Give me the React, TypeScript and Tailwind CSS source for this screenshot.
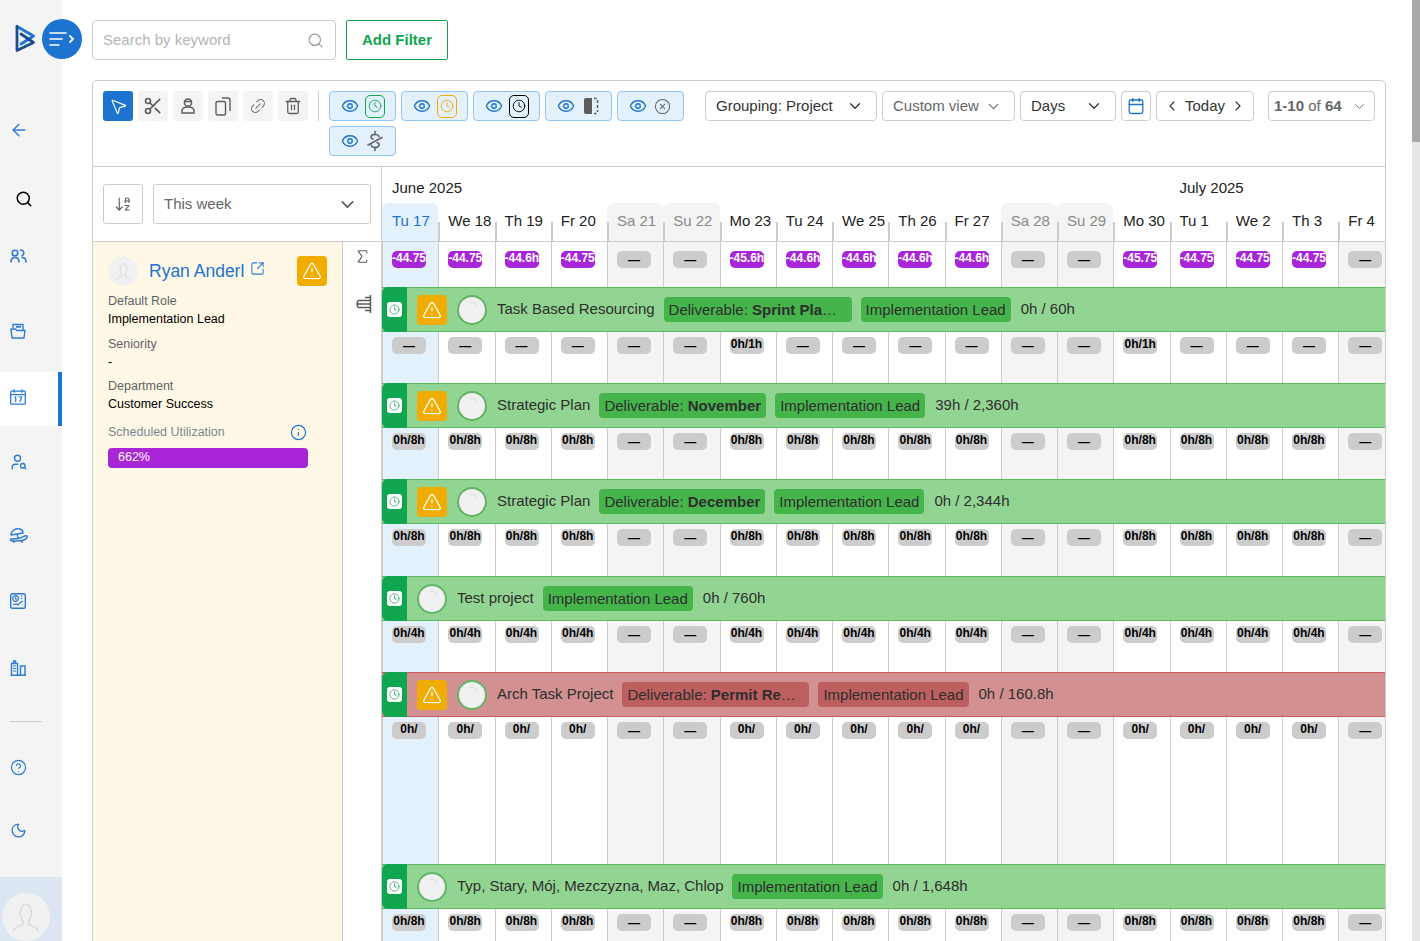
import {
  ArrowDownAZ, ArrowLeft, Calendar, ChevronDown, ChevronLeft, ChevronRight, CircleHelp, CircleX, Clock,
  Eye, Info, Link2, Moon, MousePointer2, Scissors, Search, Sigma, SquareArrowOutUpRight, Trash2,
  TriangleAlert, UserSearch,
} from 'lucide-react';
import type { ReactNode } from 'react';

const days = ['Tu 17', 'We 18', 'Th 19', 'Fr 20', 'Sa 21', 'Su 22', 'Mo 23', 'Tu 24', 'We 25', 'Th 26', 'Fr 27', 'Sa 28', 'Su 29', 'Mo 30', 'Tu 1', 'We 2', 'Th 3', 'Fr 4'];
const weekend = [4, 5, 11, 12, 17];
const summary = ['-44.75h', '-44.75h', '-44.6h', '-44.75h', '', '', '-45.6h', '-44.6h', '-44.6h', '-44.6h', '-44.6h', '', '', '-45.75h', '-44.75h', '-44.75h', '-44.75h', ''];

const rows = [
  { warn: true, title: 'Task Based Resourcing', deliverable: 'Sprint Planning', chipClass: 'w-[188px] pr-[12px]', hours: '0h / 60h', cell: '', height: 'h-[51px]' },
  { warn: true, title: 'Strategic Plan', deliverable: 'November', chipClass: 'pr-[5px]', hours: '39h / 2,360h', cell: '0h/8h', height: 'h-[51px]' },
  { warn: true, title: 'Strategic Plan', deliverable: 'December', chipClass: 'pr-[5px]', hours: '0h / 2,344h', cell: '0h/8h', height: 'h-[52px]' },
  { warn: false, title: 'Test project', deliverable: '', chipClass: '', hours: '0h / 760h', cell: '0h/4h', height: 'h-[51px]' },
  { warn: true, title: 'Arch Task Project', deliverable: 'Permit Review', chipClass: 'w-[187px] pr-[12px]', hours: '0h / 160.8h', cell: '0h/', height: 'h-[147px]', red: true },
  { warn: false, title: 'Typ, Stary, Mój, Mezczyzna, Maz, Chlop', deliverable: '', chipClass: '', hours: '0h / 1,648h', cell: '0h/8h', height: 'h-[32px]' },
];

function Logo() {
  return (
    <svg width="22" height="30" viewBox="0 0 22 30" fill="none" strokeWidth="2.8" strokeLinejoin="round" strokeLinecap="round">
      <path d="M3 2.500 L19.500 12 L7 20" stroke="#1c73d0" />
      <path d="M3 2.500 V26.500 L19.500 18.500 L7 10" stroke="#174f91" />
    </svg>
  );
}

function Avatar({ size = 'w-[30px] h-[30px]' }: { size?: string }) {
  return (
    <span className={`${size} shrink-0 rounded-full bg-[#f1f1f1] flex items-center justify-center`}>
      <svg viewBox="0 0 24 24" className="w-[70%] h-[70%]" fill="none" stroke="#dedede" strokeWidth="1.3" strokeLinecap="round">
        <path d="M3 22c1-3 5-3 7-5v-2c-1-1-2-3-2-6 0-3 2-6 4-6s4 3 4 6c0 3-1 5-2 6v2c2 2 6 2 7 5" />
      </svg>
    </span>
  );
}

function BarAvatar() {
  return (
    <span className="w-[30px] h-[30px] shrink-0 rounded-full bg-[#f1f1f1] border-2 border-[#62b565] flex items-center justify-center">
      <svg viewBox="0 0 24 24" className="w-full h-full" fill="none" stroke="#e2e2e2" strokeWidth="1.2">
        <path d="M9 5h5l3 4" />
      </svg>
    </span>
  );
}

function SideItem({ className, children }: { className: string; children: ReactNode }) {
  return <div className={`h-[20px] pl-[10px] flex items-center text-[#2b7bd6] ${className}`}>{children}</div>;
}

function UsersIcon() {
  return (
    <svg width="17" height="14" viewBox="0 0 17 14" fill="none" stroke="#2b7bd6" strokeWidth="1.6" strokeLinecap="round">
      <circle cx="5" cy="4" r="2.800" />
      <path d="M10.500 1.200c1.800-.4 3.300.9 3.300 2.800 0 1.300-.7 2.300-1.800 2.700" />
      <path d="M1 13c0-3 1.500-4.500 4-4.500S9 10 9 13M12 8.500c2.500 0 4 1.500 4 4.500" />
    </svg>
  );
}

function FolderIcon() {
  return (
    <svg width="16" height="16" viewBox="0 0 16 16" fill="none" stroke="#2b7bd6" strokeWidth="1.4" strokeLinejoin="round">
      <path d="M3 5V1.500h10V7" />
      <path d="M6 3.800h5" strokeWidth="1.800" />
      <path d="M1 6h4.500l1.500 1.500h8L14 15H2z" />
    </svg>
  );
}

function BuildingIcon() {
  return (
    <svg width="16" height="16" viewBox="0 0 16 16" fill="none" stroke="#2b7bd6" strokeWidth="1.4">
      <path d="M1.500 15V3.500h6V15M3.500 3.500V1h2v2.500" />
      <path d="M3 6h3M3 8.500h3M3 11h3" strokeWidth="1" />
      <path d="M10.500 15V6h4.500v9M0.500 15.300h15.500" />
    </svg>
  );
}

function CalendarSeventeen() {
  return (
    <svg width="16" height="16" viewBox="0 0 16 16" fill="none" stroke="#2b7bd6" strokeWidth="1.3">
      <rect x="0.700" y="2.200" width="14.600" height="13" rx="1" />
      <path d="M0.700 5.600h14.600M4 0.300v3.400M12 0.300v3.400" />
      <path d="M4.500 8.500l1.200-.6v5M8.500 8h3.200l-2 5" strokeWidth="1.200" />
    </svg>
  );
}

function Umbrella() {
  return (
    <svg width="18" height="16" viewBox="0 0 18 16" fill="none" stroke="#2b7bd6" strokeWidth="1.4" strokeLinejoin="round">
      <path d="M1 6c1-4 5-6 9-5 2 .6 3 2 3 4L1 7z" />
      <path d="M1 11c3 0 6 0 9-1 3-1 5-3 7-2 1 1-1 3-3 4-3 1-8 1-12 1-1 0-2-1-1-2zM4 13v2M12 13v2M7 6l1 4" />
    </svg>
  );
}

function ReportIcon() {
  return (
    <svg width="16" height="16" viewBox="0 0 16 16" fill="none" stroke="#2b7bd6" strokeWidth="1.2">
      <rect x="0.700" y="0.700" width="14.600" height="14.600" rx="1.500" strokeWidth="1.400" />
      <circle cx="5.500" cy="5.500" r="2.800" />
      <path d="M5.500 3.800v1.800l1.200.8M11 3h1.500M11 5.500h1.500M3 12l3-1 2 1 3-3 2-1" />
    </svg>
  );
}

function PersonIcon() {
  return (
    <svg width="18" height="18" viewBox="0 0 18 18" fill="none" stroke="#5c5c5c" strokeWidth="1.500">
      <circle cx="9" cy="5.500" r="3.600" />
      <path d="M5.500 4.500h7" />
      <path d="M3 16v-2c0-2 2-4 6-4s6 2 6 4v2z" />
    </svg>
  );
}

function CopyIcon() {
  return (
    <svg width="16" height="19" viewBox="0 0 16 19" fill="none" stroke="#5c5c5c" strokeWidth="1.400">
      <rect x="1" y="4.500" width="9.500" height="13.500" rx="1.500" />
      <path d="M7 1h6a2 2 0 0 1 2 2v11" />
    </svg>
  );
}

function BookIcon() {
  return (
    <svg width="18" height="18" viewBox="0 0 18 18">
      <path d="M2 3a2 2 0 0 1 2-2h6v16H4a2 2 0 0 1-2-2z" fill="#5c5c5c" />
      <path d="M12 1.500h2.500M15.500 3v3M15.500 8v3M15.500 13v2M12 16.500h2.500" stroke="#5c5c5c" strokeWidth="1.500" fill="none" />
    </svg>
  );
}

function NoBillIcon() {
  return (
    <svg width="20" height="22" viewBox="0 0 20 22" fill="none" stroke="#666" strokeWidth="1.600" strokeLinecap="round">
      <path d="M14 6.500C13.500 5 12 4.500 10 4.500C7.500 4.500 6 5.500 6 7C6 8 7 8.800 8 9.200" />
      <path d="M12 12.500C13.500 13 14.500 14 14 15.500C13.500 17 12 17.500 10 17.500C8 17.500 6.500 16.500 6 15" />
      <path d="M10 1.500v3M10 17.500v3M3 15l14-7.500" />
    </svg>
  );
}

function ClockBox({ className, iconClass }: { className: string; iconClass: string }) {
  return (
    <span className={`w-[20px] h-[23px] rounded-[5px] flex items-center justify-center ${className}`}>
      <Clock size={14} strokeWidth={1.500} className={iconClass} />
    </span>
  );
}

function EyeButton({ children }: { children: ReactNode }) {
  return (
    <button className="w-[67px] h-[30px] rounded-[4px] bg-[#e3f1fd] border border-[#90c4f2] flex items-center justify-center gap-[6px]">
      <Eye size={18} strokeWidth={1.800} className="text-[#1c73d0]" />
      <span className="w-[20px] flex justify-center">{children}</span>
    </button>
  );
}

function ToolButton({ active, children }: { active?: boolean; children: ReactNode }) {
  return (
    <button className={`w-[30px] h-[30px] rounded-[3px] flex items-center justify-center ${active ? 'bg-[#1c73d0] text-white' : 'bg-[#f4f4f4] text-[#5c5c5c]'}`}>
      {children}
    </button>
  );
}

function DropBox({ className, children }: { className: string; children: ReactNode }) {
  return <div className={`h-[30px] rounded-[4px] border border-[#ccc] flex items-center text-[15px] ${className}`}>{children}</div>;
}

function Pill({ value, strong }: { value: string; strong?: boolean }) {
  const cls = strong ? 'bg-[#a826d8] text-white justify-start' : 'bg-[#cccccc] text-black justify-center';
  return (
    <div className={`ml-[9px] w-[34px] h-[17px] rounded-[5px] overflow-hidden flex font-bold text-[12px] leading-[15px] whitespace-nowrap ${cls}`}>
      {value || <span className="text-[12px] leading-[19px]">—</span>}
    </div>
  );
}

function cellBg(i: number) {
  if (i === 0) return 'bg-[#e3f1fc]';
  if (weekend.includes(i)) return 'bg-[#f4f4f4]';
  return 'bg-white';
}

function CellRow({ values, className, pad, strong }: { values: string[]; className: string; pad: string; strong?: boolean }) {
  return (
    <div className={`grid grid-cols-[repeat(18,56.25px)] ${className}`}>
      {values.map((v, i) => (
        <div key={i} className={`border-l border-[#ccc] ${pad} ${cellBg(i)}`}>
          <Pill value={v} strong={strong && v !== ''} />
        </div>
      ))}
    </div>
  );
}

function ProjectBar({ row }: { row: (typeof rows)[number] }) {
  const red = row.red;
  const chip = red ? 'bg-[#bd5f5f]' : 'bg-[#45b54b]';
  return (
    <div className={`h-[45px] flex items-center border-y text-[15px] text-[#2e2e2e] whitespace-nowrap ${red ? 'bg-[#d29090] border-[#c95c5c]' : 'bg-[#92d592] border-[#5cb85c]'}`}>
      <div className="w-[25px] h-[45px] -my-px shrink-0 bg-[#10a64f] rounded-l-[6px] flex items-center justify-center">
        <span className="w-[15px] h-[15px] rounded-[3px] bg-white flex items-center justify-center">
          <Clock size={11} strokeWidth={1.800} className="text-[#34a866]" />
        </span>
      </div>
      <div className="flex items-center gap-[10px] ml-[10px]">
        {row.warn && (
          <span className="w-[30px] h-[30px] rounded-[4px] bg-[#f0ad00] flex items-center justify-center">
            <TriangleAlert size={20} strokeWidth={1.500} className="text-white" />
          </span>
        )}
        <BarAvatar />
      </div>
      <span className="ml-[10px]">{row.title}</span>
      {row.deliverable && (
        <span className={`ml-[9px] h-[25px] leading-[25px] pl-[5px] rounded-[4px] truncate ${chip} ${row.chipClass}`}>
          Deliverable: <b>{row.deliverable}</b>
        </span>
      )}
      <span className={`ml-[9px] h-[25px] leading-[25px] px-[5px] rounded-[4px] ${chip}`}>Implementation Lead</span>
      <span className="ml-[10px]">{row.hours}</span>
    </div>
  );
}

function Field({ label, value, className }: { label: string; value: string; className: string }) {
  return (
    <div className={className}>
      <div className="text-[#5f6368] leading-[18px]">{label}</div>
      <div className="text-black leading-[18px]">{value}</div>
    </div>
  );
}

export default function App() {
  return (
    <div className="h-[941px] w-[1420px] flex overflow-hidden relative bg-white font-['Liberation_Sans',Arial,sans-serif]">
      <aside className="w-[62px] shrink-0 bg-[#f4f4f4] flex flex-col">
        <div className="pl-[14px] pt-[24px] h-[60px]"><Logo /></div>
        <SideItem className="mt-[60px]"><ArrowLeft size={20} strokeWidth={1.600} className="-ml-[1px]" /></SideItem>
        <SideItem className="mt-[50px] pl-[15px] text-black"><Search size={18} strokeWidth={2} /></SideItem>
        <SideItem className="mt-[37px]"><UsersIcon /></SideItem>
        <SideItem className="mt-[55px]"><FolderIcon /></SideItem>
        <div className="mt-[31px] h-[55px] bg-white border-r-4 border-[#1c73d0] pl-[10px] pb-[5px] flex items-center"><CalendarSeventeen /></div>
        <SideItem className="mt-[26px]"><UserSearch size={18} strokeWidth={1.800} /></SideItem>
        <SideItem className="mt-[53px] pt-[2px]"><Umbrella /></SideItem>
        <SideItem className="mt-[46px] pt-[1px]"><ReportIcon /></SideItem>
        <SideItem className="mt-[47px]"><BuildingIcon /></SideItem>
        <div className="mt-[44px] ml-[10px] w-[32px] h-px bg-[#cccccc]" />
        <SideItem className="mt-[35px]"><CircleHelp size={17} strokeWidth={1.700} /></SideItem>
        <SideItem className="mt-[43px]"><Moon size={17} strokeWidth={1.800} /></SideItem>
        <div className="mt-[37px] flex-1 bg-[#dce6f3] pt-[16px] pl-[2px]">
          <Avatar size="w-[48px] h-[48px]" />
        </div>
      </aside>

      <button className="absolute left-[42px] top-[19px] w-[40px] h-[40px] rounded-full bg-[#1c73d0] flex items-center justify-center">
        <svg width="26" height="16" viewBox="0 0 26 16" fill="none" stroke="white" strokeWidth="1.600" strokeLinecap="round">
          <path d="M1 2h16M1 8h12M1 14h9" />
          <path d="M21 5l3 3-3 3" strokeWidth="1.800" />
        </svg>
      </button>

      <main className="flex-1 min-w-0 pl-[30px] pt-[20px]">
        <div className="flex gap-[10px]">
          <div className="w-[244px] h-[40px] rounded-[4px] border border-[#ccc] flex items-center px-[10px] justify-between text-[15px] text-[#b5b5b5]">
            Search by keyword
            <Search size={17} strokeWidth={1.700} className="text-[#9a9a9a] mr-[1px]" />
          </div>
          <button className="w-[102px] h-[40px] rounded-[2px] border border-[#10a64f] text-[#10a64f] font-bold text-[15px]">Add Filter</button>
        </div>

        <section className="mt-[20px] w-[1294px] h-[900px] border border-[#ccc] rounded-t-[5px]">
          <div className="h-[86px] border-b border-[#ccc] flex items-start pl-[10px] pt-[10px]">
            <div className="flex gap-[5px]">
              <ToolButton active><MousePointer2 size={19} strokeWidth={1.500} /></ToolButton>
              <ToolButton><Scissors size={20} strokeWidth={2} /></ToolButton>
              <ToolButton><PersonIcon /></ToolButton>
              <ToolButton><CopyIcon /></ToolButton>
              <ToolButton><Link2 size={18} strokeWidth={1.500} className="-rotate-45 text-[#777]" /></ToolButton>
              <ToolButton><Trash2 size={18} strokeWidth={1.700} /></ToolButton>
            </div>
            <div className="w-px h-[30px] bg-[#ccc] ml-[10px] mr-[10px]" />
            <div className="w-[360px] flex flex-wrap gap-[5px]">
              <EyeButton><ClockBox className="border border-[#10a64f]" iconClass="text-[#10a64f]" /></EyeButton>
              <EyeButton><ClockBox className="border border-[#f0ad00]" iconClass="text-[#f0ad00]" /></EyeButton>
              <EyeButton><ClockBox className="border border-black" iconClass="text-black" /></EyeButton>
              <EyeButton><BookIcon /></EyeButton>
              <EyeButton><CircleX size={17} strokeWidth={1.500} className="text-[#666]" /></EyeButton>
              <EyeButton><NoBillIcon /></EyeButton>
            </div>
            <div className="flex gap-[5px] ml-[16px]">
              <DropBox className="w-[172px] justify-between pl-[10px] pr-[12px] text-[#333]">Grouping: Project<ChevronDown size={18} strokeWidth={1.700} /></DropBox>
              <DropBox className="w-[133px] justify-between pl-[10px] pr-[12px] text-[#666]">Custom view<ChevronDown size={17} strokeWidth={1.500} /></DropBox>
              <DropBox className="w-[96px] justify-between pl-[10px] pr-[12px] text-[#333]">Days<ChevronDown size={18} strokeWidth={1.700} /></DropBox>
              <DropBox className="w-[30px] justify-center"><Calendar size={18} strokeWidth={1.700} className="text-[#1c73d0]" /></DropBox>
              <DropBox className="w-[98px] justify-between px-[7px] text-[#333]"><ChevronLeft size={16} strokeWidth={1.700} />Today<ChevronRight size={16} strokeWidth={1.700} /></DropBox>
              <DropBox className="ml-[9px] w-[107px] justify-between pl-[5px] pr-[7px] text-[#666]">
                <span><b>1-10</b> of <b>64</b></span>
                <ChevronDown size={15} strokeWidth={1.400} />
              </DropBox>
            </div>
          </div>

          <div className="flex">
            <div className="w-[289px] shrink-0 border-r border-[#ccc]">
              <div className="h-[75px] border-b border-[#ccc] flex items-start gap-[10px] pl-[10px] pt-[17px]">
                <button className="w-[40px] h-[40px] rounded-[3px] border border-[#ccc] flex items-center justify-center text-[#5c5c5c]">
                  <ArrowDownAZ size={18} strokeWidth={1.500} />
                </button>
                <div className="w-[218px] h-[40px] rounded-[3px] border border-[#ccc] flex items-center justify-between pl-[10px] pr-[12px] text-[15px] text-[#666]">
                  This week
                  <ChevronDown size={21} strokeWidth={1.700} className="text-[#555]" />
                </div>
              </div>
              <div className="flex h-[700px]">
                <div className="w-[250px] bg-[#fff8e6] border-r border-[#ccc] pl-[15px] pt-[14px] text-[12.5px]">
                  <div className="flex items-center h-[30px]">
                    <Avatar />
                    <span className="ml-[11px] text-[17.500px] text-[#1c73d0]">Ryan Anderl</span>
                    <SquareArrowOutUpRight size={15} strokeWidth={1.700} className="ml-[6px] -mt-[6px] text-[#2b7bd6]" />
                    <span className="ml-[32px] w-[30px] h-[30px] rounded-[4px] bg-[#f0ad00] flex items-center justify-center">
                      <TriangleAlert size={20} strokeWidth={1.500} className="text-white" />
                    </span>
                  </div>
                  <Field className="mt-[6px]" label="Default Role" value="Implementation Lead" />
                  <Field className="mt-[7px]" label="Seniority" value="-" />
                  <Field className="mt-[6px]" label="Department" value="Customer Success" />
                  <div className="mt-[10px] w-[200px] flex items-center justify-between text-[#7b8794] leading-[18px]">
                    Scheduled Utilization
                    <Info size={17} strokeWidth={1.700} className="text-[#1c73d0] mr-[1px]" />
                  </div>
                  <div className="mt-[7px] w-[200px] h-[20px] rounded-[4px] bg-[#a826d8] text-white pl-[10px] leading-[19px]">662%</div>
                </div>
                <div className="flex-1 flex flex-col items-center pt-[6px] text-[#5c5c5c]">
                  <Sigma size={17} strokeWidth={1.500} />
                  <svg className="mt-[30px] ml-[3px]" width="16" height="18" viewBox="0 0 16 18" fill="none" stroke="#5c5c5c" strokeWidth="1.500">
                    <path d="M14.500 0v18M9 2.500h5M2 5.500h12M0 9h14M2 12.500h12M9 15.500h5" />
                    <path d="M1.500 5.500v7" />
                  </svg>
                </div>
              </div>
            </div>

            <div className="w-[1004px] overflow-hidden">
              <div className="grid grid-cols-[repeat(18,56.25px)] h-[36px] items-center text-[15px] text-[#222]">
                <span className="col-start-1 col-span-4 pl-2.5 pt-[6px]">June 2025</span>
                <span className="col-start-15 col-span-4 pl-2.5 pt-[6px]">July 2025</span>
              </div>
              <div className="grid grid-cols-[repeat(18,56.25px)] h-[39px] border-b border-[#ccc] text-[15px]">
                {days.map((d, i) => {
                  const tab = i === 0 ? 'bg-[#e3f1fc] text-[#1c73d0] rounded-t-[6px]' : weekend.includes(i) && i !== 17 ? 'bg-[#f4f4f4] text-[#8a8a8a] rounded-t-[6px]' : 'text-[#222]';
                  return (
                    <div key={d} className={`relative pl-2.5 pt-[7px] leading-[22px] whitespace-nowrap ${tab}`}>
                      {d}
                      {i > 0 && <span className="absolute left-0 bottom-0 w-[2px] h-[19px] bg-[#ccc]" />}
                    </div>
                  );
                })}
              </div>
              <CellRow values={summary} className="h-[45px]" pad="pt-[9px]" strong />
              {rows.map((row, r) => {
                const values = days.map((_, i) => {
                  if (weekend.includes(i)) return '';
                  if (r === 0) return i === 6 || i === 13 ? '0h/1h' : '';
                  return row.cell;
                });
                return (
                  <div key={r}>
                    <ProjectBar row={row} />
                    <CellRow values={values} className={row.height} pad="pt-[5px]" />
                  </div>
                );
              })}
            </div>
          </div>
        </section>
      </main>

      <div className="w-[8px] shrink-0 bg-[#e6e6e6]">
        <div className="h-[142px] bg-[#a9a9a9]" />
      </div>
    </div>
  );
}
